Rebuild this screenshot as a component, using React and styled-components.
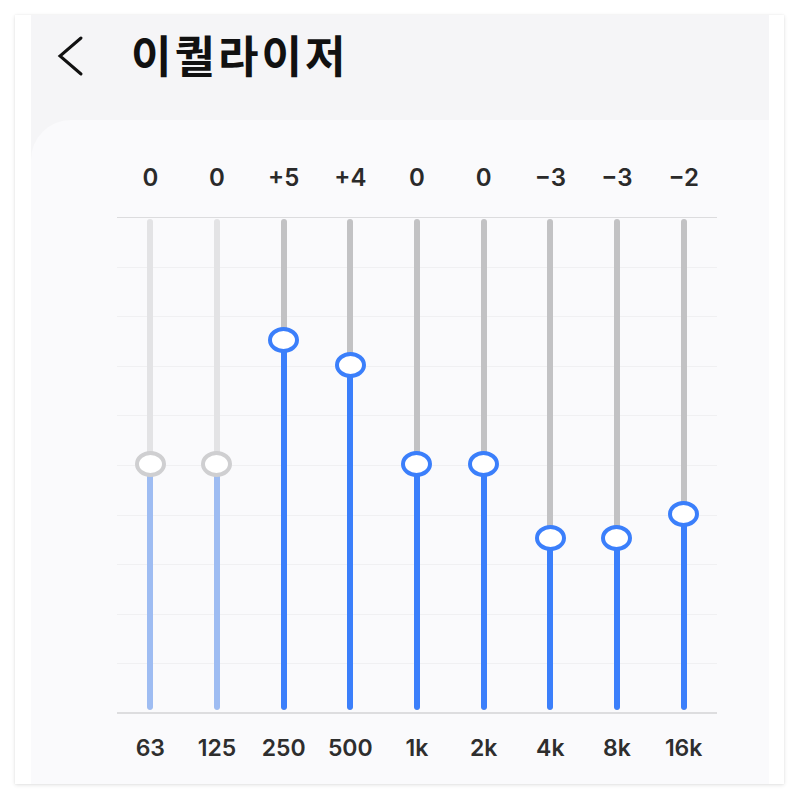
import React from "react";
import styled, { createGlobalStyle } from "styled-components";

const GlobalStyle = createGlobalStyle`
  html, body {
    margin: 0;
    padding: 0;
    background: #ffffff;
  }
  * { box-sizing: border-box; }
`;

const STEP = 24.8; // px per dB
const TRACK_H = 497;
const MID = 246;

const bands = [
  { freq: "63", value: 0, muted: true },
  { freq: "125", value: 0, muted: true },
  { freq: "250", value: 5 },
  { freq: "500", value: 4 },
  { freq: "1k", value: 0 },
  { freq: "2k", value: 0 },
  { freq: "4k", value: -3 },
  { freq: "8k", value: -3 },
  { freq: "16k", value: -2 },
];

const formatValue = (v) => (v > 0 ? `+${v}` : v < 0 ? `\u2212${-v}` : "0");

const Screen = styled.div`
  margin: 15px 16px 15px 15px;
  height: 769px;
  background: #ffffff;
  box-shadow: 0 1px 4px rgba(0, 0, 0, 0.12), 0 0 1px rgba(0, 0, 0, 0.08);
  padding: 0 15px 0 16px;
  display: flex;
`;

const Surface = styled.div`
  flex: 1;
  background: #f5f5f7;
  display: flex;
  flex-direction: column;
`;

const Header = styled.header`
  height: 105px;
  display: flex;
  align-items: flex-start;
  padding: 20px 0 0 26px;
  gap: 46px;
`;

const BackButton = styled.button`
  border: none;
  background: none;
  padding: 0;
  width: 28px;
  height: 42px;
  display: flex;
  align-items: center;
  justify-content: center;
  color: #111;
  cursor: pointer;
`;

const Title = styled.h1`
  margin: 0;
  margin-top: -3px;
  font-family: "Noto Sans CJK KR", "Noto Sans", sans-serif;
  font-weight: 700;
  font-size: 44px;
  line-height: 44px;
  letter-spacing: 3px;
  color: #111;
`;

const Panel = styled.main`
  flex: 1;
  background: #fafafc;
  border-top-left-radius: 40px;
  padding: 43px 52px 0 86px;
`;

const Chart = styled.div`
  width: 600px;
  display: grid;
  grid-template-columns: repeat(9, 1fr);
  grid-template-rows: 30px 24px ${TRACK_H}px 70px;
`;

const ValueLabel = styled.div`
  grid-row: 1;
  text-align: center;
  font-family: Inter, Roboto, "Liberation Sans", sans-serif;
  font-weight: 600;
  font-size: 24px;
  line-height: 30px;
  color: #2a2a2a;
`;

const Board = styled.div`
  grid-row: 3;
  grid-column: 1 / -1;
  border-top: 1px solid #dcdcde;
  border-bottom: 2px solid #dddddf;
  background-image: repeating-linear-gradient(
    to bottom,
    transparent 0,
    transparent 48.6px,
    #f0f0f2 48.6px,
    #f0f0f2 49.6px
  );
  display: grid;
  grid-template-columns: repeat(9, 1fr);
`;

const Slot = styled.div`
  position: relative;
  display: flex;
  justify-content: center;
`;

const Track = styled.div`
  position: relative;
  width: 6px;
  height: ${TRACK_H - 6}px;
  margin-top: 1px;
  border-radius: 3px;
  background: ${(p) => (p.$muted ? "#e3e3e5" : "#c2c2c4")};
  overflow: hidden;
`;

const Fill = styled.div`
  position: absolute;
  left: 0;
  right: 0;
  bottom: 0;
  background: ${(p) => (p.$muted ? "#9ebcf2" : "#3b7ffb")};
  border-radius: 3px;
`;

const Thumb = styled.div`
  position: absolute;
  left: 50%;
  width: 31px;
  height: 26px;
  margin-left: -15.5px;
  margin-top: -13px;
  border-radius: 50%;
  background: #ffffff;
  border: 4px solid ${(p) => (p.$muted ? "#cfcfd1" : "#3b7ffb")};
`;

const FreqLabel = styled.div`
  grid-row: 4;
  text-align: center;
  padding-top: 20px;
  font-family: Inter, Roboto, "Liberation Sans", sans-serif;
  font-weight: 600;
  font-size: 23px;
  line-height: 28px;
  color: #2e2e2e;
`;

function ChevronLeft() {
  return (
    <svg width="28" height="42" viewBox="0 0 28 42" fill="none">
      <polyline
        points="24,3 3,21 24,39"
        stroke="currentColor"
        strokeWidth="3"
        strokeLinecap="round"
        strokeLinejoin="miter"
      />
    </svg>
  );
}

export default function App() {
  return (
    <>
      <GlobalStyle />
      <Screen>
        <Surface>
          <Header>
            <BackButton aria-label="뒤로">
              <ChevronLeft />
            </BackButton>
            <Title>이퀄라이저</Title>
          </Header>
          <Panel>
            <Chart>
              {bands.map((b) => (
                <ValueLabel key={`v-${b.freq}`}>{formatValue(b.value)}</ValueLabel>
              ))}
              <Board>
                {bands.map((b) => {
                  const center = MID - b.value * STEP;
                  return (
                    <Slot key={`s-${b.freq}`}>
                      <Track $muted={b.muted}>
                        <Fill $muted={b.muted} style={{ top: center }} />
                      </Track>
                      <Thumb $muted={b.muted} style={{ top: center }} />
                    </Slot>
                  );
                })}
              </Board>
              {bands.map((b) => (
                <FreqLabel key={`f-${b.freq}`}>{b.freq}</FreqLabel>
              ))}
            </Chart>
          </Panel>
        </Surface>
      </Screen>
    </>
  );
}
